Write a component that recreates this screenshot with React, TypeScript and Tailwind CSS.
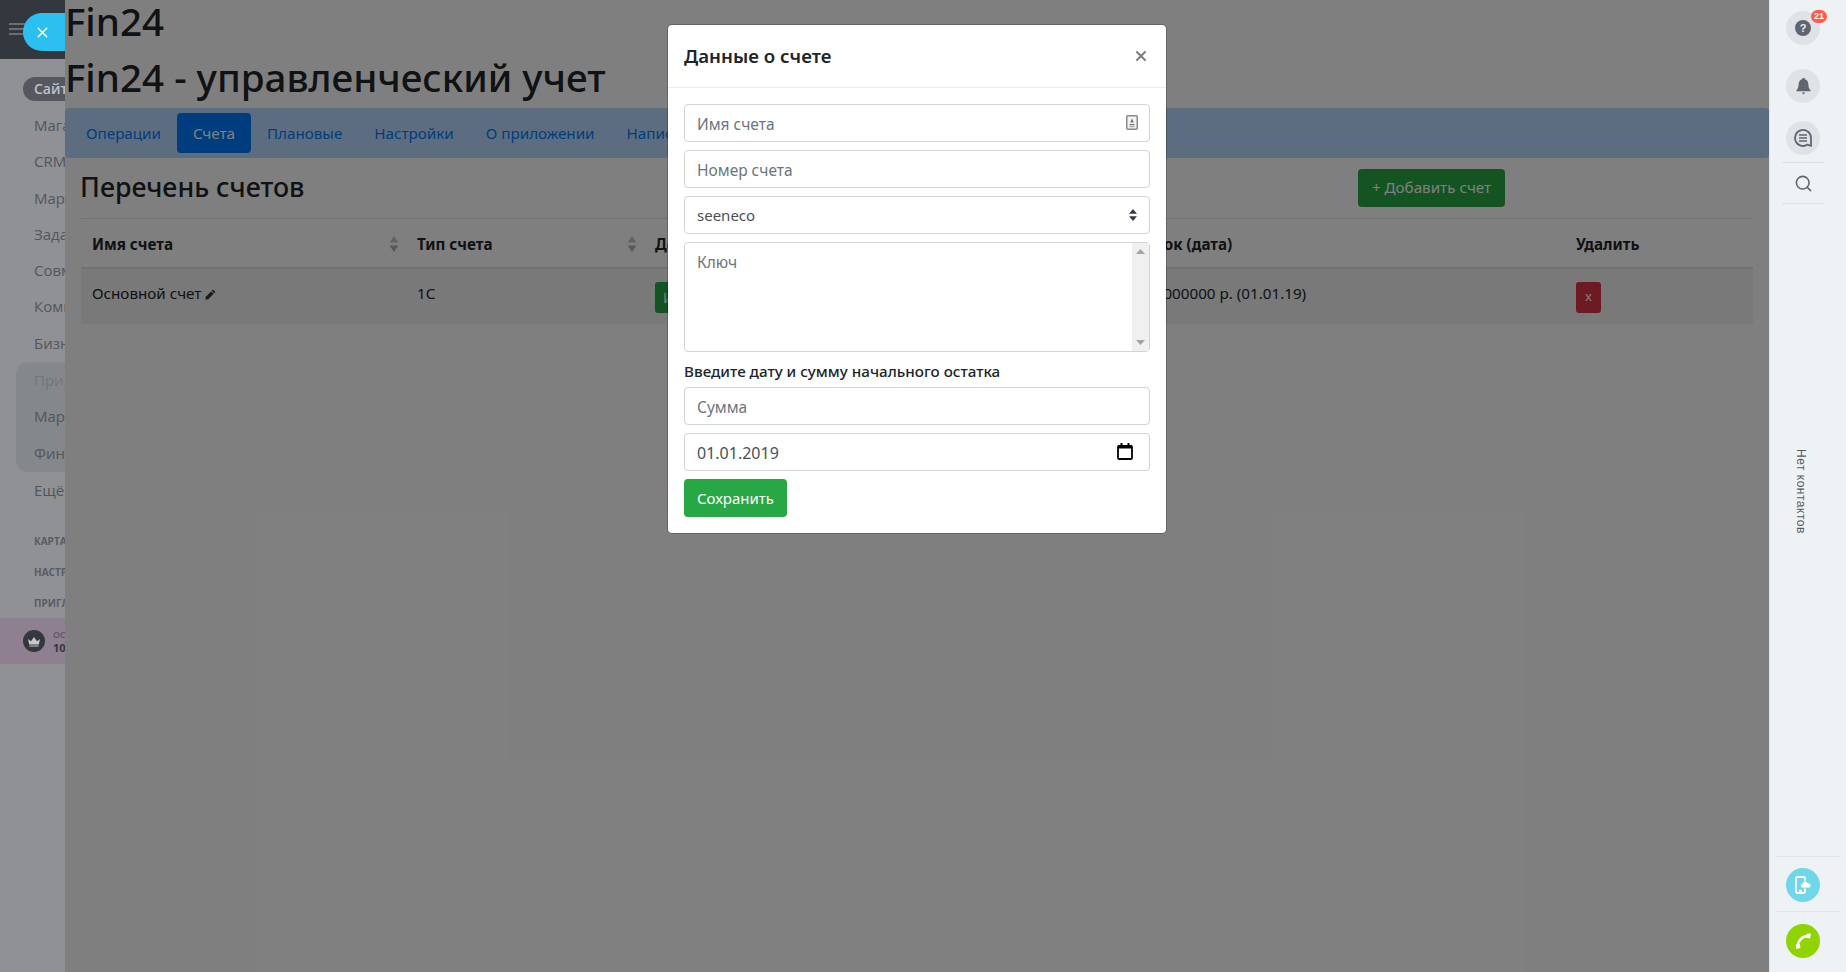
import React from 'react';
import { X, Search } from 'lucide-react';

const menuTop = ['Магазины', 'CRM', 'Маркетинг', 'Задачи', 'Совместная', 'Компания', 'Бизнес'];
const capsItems = ['КАРТА САЙТА', 'НАСТРОЙКИ', 'ПРИГЛАСИТЬ'];
const tabs = ['Операции', 'Счета', 'Плановые', 'Настройки', 'О приложении', 'Написать'];

const inputClass =
  'block w-full h-[38px] px-[12px] pt-[2px] border border-[#ced4da] rounded-[4px] bg-white text-[15.5px] text-[#495057] placeholder:text-[#6c757d] outline-none';

const SortArrows = () => (
  <svg width="10" height="16" viewBox="0 0 10 16" className="absolute right-[7px] top-[17px]">
    <path d="M5 0l4.500 6.500h-9z" fill="#c4c4c4" />
    <path d="M5 16L.5 9.500h9z" fill="#b0b0b0" />
  </svg>
);

const Sidebar = () => (
  <aside className="relative w-[65px] shrink-0 h-full overflow-hidden bg-[#8f9194] font-['Open_Sans',sans-serif]">
    <div className="h-[59px] bg-[#33383f] flex flex-col gap-[3px] pl-[9px] pt-[23px]">
      <div className="w-[16px] h-[2px] bg-[#6a6e74]" />
      <div className="w-[16px] h-[2px] bg-[#6a6e74]" />
      <div className="w-[16px] h-[2px] bg-[#6a6e74]" />
    </div>
    <div className="absolute left-[23px] top-[13px] w-[60px] h-[38px] rounded-full bg-[#2bc0f0] pl-[11px] flex items-center">
      <X size={17} color="#fff" strokeWidth={2} />
    </div>

    <div className="ml-[23px] mt-[18px] w-[70px] h-[24px] rounded-full bg-[#55585e] pl-[11px] text-[14px] leading-[24px] text-[#bfc2c6] font-semibold whitespace-nowrap">
      Сайты
    </div>
    <ul className="mt-[6px] pl-[34px] text-[15px] leading-[36.3px] text-[#52565c] whitespace-nowrap">
      {menuTop.map((m) => (
        <li key={m}>{m}</li>
      ))}
    </ul>
    <div className="ml-[16px] mt-[1px] w-[70px] h-[110px] rounded-[12px] bg-[#84888a] pl-[18px] text-[15px] leading-[36.3px] text-[#52565c] whitespace-nowrap">
      <div className="text-[#73777a]">Приложения</div>
      <div>Маркет</div>
      <div>Финансы</div>
    </div>
    <div className="pl-[34px] text-[15px] leading-[36.3px] text-[#52565c] whitespace-nowrap">Ещё</div>

    <ul className="mt-[18px] pl-[34px] text-[10px] font-bold leading-[31px] text-[#575b62] whitespace-nowrap">
      {capsItems.map((c) => (
        <li key={c}>{c}</li>
      ))}
    </ul>

    <div className="mt-[-1px] h-[46px] bg-[#8e8090] flex items-center pl-[23px] gap-[8px] whitespace-nowrap">
      <div className="w-[22px] h-[22px] shrink-0 rounded-full bg-[#33383f] flex items-center justify-center">
        <svg width="14" height="11" viewBox="0 0 14 11" fill="#c9c6cc">
          <path d="M1 3l3 2.200L7 1l3 4.200L13 3l-1.200 5.500H2.200zM2.400 9.400h9.200v1.200H2.400z" />
        </svg>
      </div>
      <div className="leading-none">
        <div className="text-[9px] font-semibold text-[#5c5568]">ОСТАЛОСЬ</div>
        <div className="mt-[3px] text-[11px] font-bold text-[#33383f]">10 дней</div>
      </div>
    </div>
  </aside>
);

const Modal = () => (
  <div className="w-[500px] h-[510px] mt-[24px] bg-white rounded-[5px] border border-black/20 bg-clip-padding">
    <div className="h-[63px] border-b border-[#e9ecef] px-[16px] flex items-center justify-between">
      <h5 className="text-[18.7px] font-semibold text-[#212529] mt-[1px]">Данные о счете</h5>
      <X size={16} strokeWidth={3} color="#7d7d7d" className="mr-[1px] -mt-[1px]" />
    </div>
    <form className="px-[16px] pt-[16px] flex flex-col">
      <div className="relative">
        <input className={inputClass} placeholder="Имя счета" readOnly />
        <svg width="12" height="15" viewBox="0 0 12 15" className="absolute right-[12px] top-[11px]">
          <rect x="0.75" y="0.75" width="10.5" height="13.5" rx="1" fill="#f2f2f2" stroke="#8a8a8a" strokeWidth="1.5" />
          <path d="M6 3.500l1.800 4H4.200z" fill="#777" />
          <rect x="3.5" y="9" width="5" height="1.2" fill="#777" />
          <rect x="3.5" y="11" width="5" height="1.2" fill="#aaa" />
        </svg>
      </div>
      <input className={`${inputClass} mt-[8px]`} placeholder="Номер счета" readOnly />
      <div className="relative mt-[8px]">
        <select className={`${inputClass} appearance-none !pt-0 !text-[15px]`} defaultValue="seeneco">
          <option>seeneco</option>
        </select>
        <svg width="8" height="12" viewBox="0 0 8 12" className="absolute right-[13px] top-[13px]">
          <path d="M4 0l4 4.800H0zM4 12L0 7.200h8z" fill="#343a40" />
        </svg>
      </div>
      <div className="relative mt-[8px] h-[110px]">
        <textarea
          className="block w-full h-full resize-none px-[12px] pt-[8px] border border-[#ced4da] rounded-[4px] text-[15.5px] text-[#495057] placeholder:text-[#6c757d] outline-none"
          placeholder="Ключ"
          readOnly
        />
        <div className="absolute right-[1px] top-[1px] bottom-[1px] w-[17px] bg-[#f0f0f0] flex flex-col justify-between items-center py-[6px]">
          <svg width="9" height="5" viewBox="0 0 9 5"><path d="M4.500 0L9 5H0z" fill="#a3a3a3" /></svg>
          <svg width="9" height="5" viewBox="0 0 9 5"><path d="M4.500 5L0 0h9z" fill="#a3a3a3" /></svg>
        </div>
      </div>
      <label className="block mt-[7px] mb-[4px] h-[24px] text-[15.2px] leading-[24px] font-medium text-[#212529]">
        Введите дату и сумму начального остатка
      </label>
      <input className={inputClass} placeholder="Сумма" readOnly />
      <div className="relative mt-[8px]">
        <input className={`${inputClass} !pt-[1px] !text-[16px]`} defaultValue="01.01.2019" readOnly />
        <svg width="16" height="17" viewBox="0 0 16 17" className="absolute right-[17px] top-[10px]">
          <rect x="1" y="3" width="14" height="13" rx="1" fill="none" stroke="#000" strokeWidth="1.8" />
          <rect x="1" y="2.5" width="14" height="3" fill="#000" />
          <rect x="3.5" y="0" width="2" height="3" fill="#000" />
          <rect x="10.5" y="0" width="2" height="3" fill="#000" />
        </svg>
      </div>
      <button type="button" className="mt-[8px] w-[103px] h-[38px] rounded-[4px] bg-[#28a745] text-white text-[15px]">
        Сохранить
      </button>
    </form>
  </div>
);

const Main = () => (
  <main className="relative flex-1 min-w-0 h-full overflow-hidden bg-white font-['Noto_Sans',sans-serif] text-[#212529]">
    <div className="-mt-[3px]">
      <h1 className="text-[38.6px] leading-[48px] mb-[8px] font-medium">Fin24</h1>
      <h1 className="text-[38.6px] leading-[48px] mb-[7px] font-medium">Fin24 - управленческий учет</h1>
    </div>

    <nav className="h-[50px] bg-[#b8daff] rounded-[4px] flex items-center pl-[5px] text-[15.2px] text-[#007bff]">
      {tabs.map((t, i) => (
        <a
          key={t}
          className={
            i === 1
              ? 'h-[40px] w-[74px] rounded-[4px] bg-[#007bff] text-white flex items-center justify-center'
              : 'h-[40px] px-[16px] flex items-center whitespace-nowrap'
          }
        >
          {t}
        </a>
      ))}
    </nav>

    <div className="px-[16px]">
      <div className="h-[61px] flex items-center justify-between border-b border-[#dee2e6]">
        <h3 className="text-[26.8px] font-medium -ml-[1px] -mt-[2px]">Перечень счетов</h3>
        <button className="w-[147px] h-[38px] mr-[248px] -mt-[1px] rounded-[4px] bg-[#28a745] text-white text-[15.2px]">
          + Добавить счет
        </button>
      </div>
      <table className="table-fixed w-full text-[15.2px]">
        <thead>
          <tr className="h-[49px] border-b-2 border-[#dee2e6] text-left">
            <th className="relative w-[325px] pl-[11px] pt-[2px] font-bold">Имя счета<SortArrows /></th>
            <th className="relative w-[238px] pl-[11px] pt-[2px] font-bold">Тип счета<SortArrows /></th>
            <th className="w-[461px] pl-[11px] pt-[2px] font-bold">Действия</th>
            <th className="w-[460px] pl-[15px] pt-[2px] font-bold">Остаток (дата)</th>
            <th className="pl-[11px] pt-[2px] font-bold">Удалить</th>
          </tr>
        </thead>
        <tbody>
          <tr className="h-[56px] bg-[#f2f2f2]">
            <td className="pl-[11px] pb-[6px]">
              <span className="inline-flex items-center gap-[4px]">
                Основной счет
                <svg width="11" height="11" viewBox="0 0 11 11" fill="#333" className="mt-[2px]">
                  <path d="M8 .6l2.400 2.400-1.200 1.200L6.800 1.800zM6.200 2.400l2.400 2.400-5.400 5.400L.4 10.600l.4-2.800z" />
                </svg>
              </span>
            </td>
            <td className="pl-[11px] pb-[6px]">1С</td>
            <td className="pl-[11px] pt-[1px]">
              <span className="inline-flex items-center h-[31px] px-[8px] rounded-[3px] bg-[#28a745] text-white text-[14px]">Изменить</span>
            </td>
            <td className="pl-[15px] pb-[6px]">10000000000 р. (01.01.19)</td>
            <td className="pl-[11px] pt-[1px]">
              <span className="inline-flex items-center justify-center w-[25px] h-[31px] rounded-[3px] bg-[#dc3545] text-white text-[13px]">x</span>
            </td>
          </tr>
        </tbody>
      </table>
    </div>

    <div className="absolute inset-0 bg-black/50 flex justify-center items-start">
      <Modal />
    </div>
  </main>
);

const RightPanel = () => (
  <aside className="w-[77px] shrink-0 h-full bg-[#eef2f4] flex flex-col items-center pl-[1px] pr-[11px] border-l border-[#dfe3e6]">
    <div className="relative mt-[11px] w-[34px] h-[34px] rounded-full bg-[#dfe3e7] flex items-center justify-center">
      <svg width="16" height="16" viewBox="0 0 16 16">
        <circle cx="8" cy="8" r="8" fill="#5f6670" />
        <text x="8" y="12" textAnchor="middle" fontSize="11" fontWeight="700" fill="#e6e9ec" fontFamily="Liberation Sans">?</text>
      </svg>
      <span className="absolute -right-[7px] -top-[1px] h-[13px] px-[3px] rounded-full bg-[#ff5a4a] text-white text-[9px] leading-[13px] font-bold font-['Liberation_Sans',sans-serif]">21</span>
    </div>
    <div className="mt-[24px] w-[34px] h-[34px] rounded-full bg-[#dfe3e7] flex items-center justify-center">
      <svg width="15" height="17" viewBox="0 0 15 17" fill="#5f6670">
        <path d="M7.500 0C8.400 0 9 .6 9 1.300 11.300 2 12.400 4 12.400 6.500c0 3 .8 4.500 2.100 5.500v1.200H.5V12c1.300-1 2.100-2.500 2.100-5.500C2.600 4 3.700 2 6 1.300 6 .6 6.600 0 7.500 0zM5.700 14.400h3.600L7.500 16.600z" />
      </svg>
    </div>
    <div className="mt-[18px] w-[34px] h-[34px] rounded-full bg-[#dfe3e7] flex items-center justify-center">
      <svg width="20" height="20" viewBox="0 0 20 20" fill="none" stroke="#5f6670">
        <path d="M18 10a8 8 0 1 0-3.500 6.600L18 18z" strokeWidth="1.8" strokeLinejoin="round" />
        <path d="M6 7h8M6 10h8M6 13h8" strokeWidth="1.3" />
      </svg>
    </div>
    <div className="mt-[7px] w-[43px] border-t border-[#dfe3e6]" />
    <Search size={19} strokeWidth={2} color="#5f6670" className="mt-[11px]" />
    <div className="mt-[10px] w-[43px] border-t border-[#dfe3e6]" />
    <div className="mt-[245px] -ml-[4px] [writing-mode:vertical-rl] font-['Liberation_Sans',sans-serif] text-[12px] tracking-[0.5px] text-[#555b62] whitespace-nowrap">
      Нет контактов
    </div>
    <div className="mt-auto w-[65px] ml-[11px] border-t border-[#dfe3e6]" />
    <div className="mt-[11px] w-[34px] h-[34px] rounded-full bg-[#6fd7e8] flex items-center justify-center">
      <svg width="16" height="18" viewBox="0 0 16 18">
        <rect x="1" y="1" width="9" height="16" rx="1.500" fill="none" stroke="#fff" strokeWidth="1.800" />
        <rect x="4" y="14" width="3" height="1.500" fill="#fff" />
        <path d="M7 12a2.200 2.200 0 0 1 .3-4.300 3 3 0 0 1 5.700-.7 2.500 2.500 0 0 1 1 5z" fill="#fff" stroke="#6fd7e8" strokeWidth="0.8" />
      </svg>
    </div>
    <div className="mt-[9px] w-[65px] ml-[11px] border-t border-[#dfe3e6]" />
    <div className="mt-[12px] mb-[14px] w-[34px] h-[34px] rounded-full bg-[#8fd400] flex items-center justify-center">
      <svg width="20" height="20" viewBox="0 0 20 20" fill="none" stroke="#fff">
        <path d="M5 15C5 9.500 9.500 5 15 5" strokeWidth="2.600" />
        <path d="M3 18l-.2-4.500 4-.5.700 4zM18 2.500l-4.500.2-.5 4 4 .700z" fill="#fff" stroke="none" />
      </svg>
    </div>
  </aside>
);

export default function App() {
  return (
    <div className="flex w-[1846px] h-[972px] overflow-hidden">
      <Sidebar />
      <Main />
      <RightPanel />
    </div>
  );
}
